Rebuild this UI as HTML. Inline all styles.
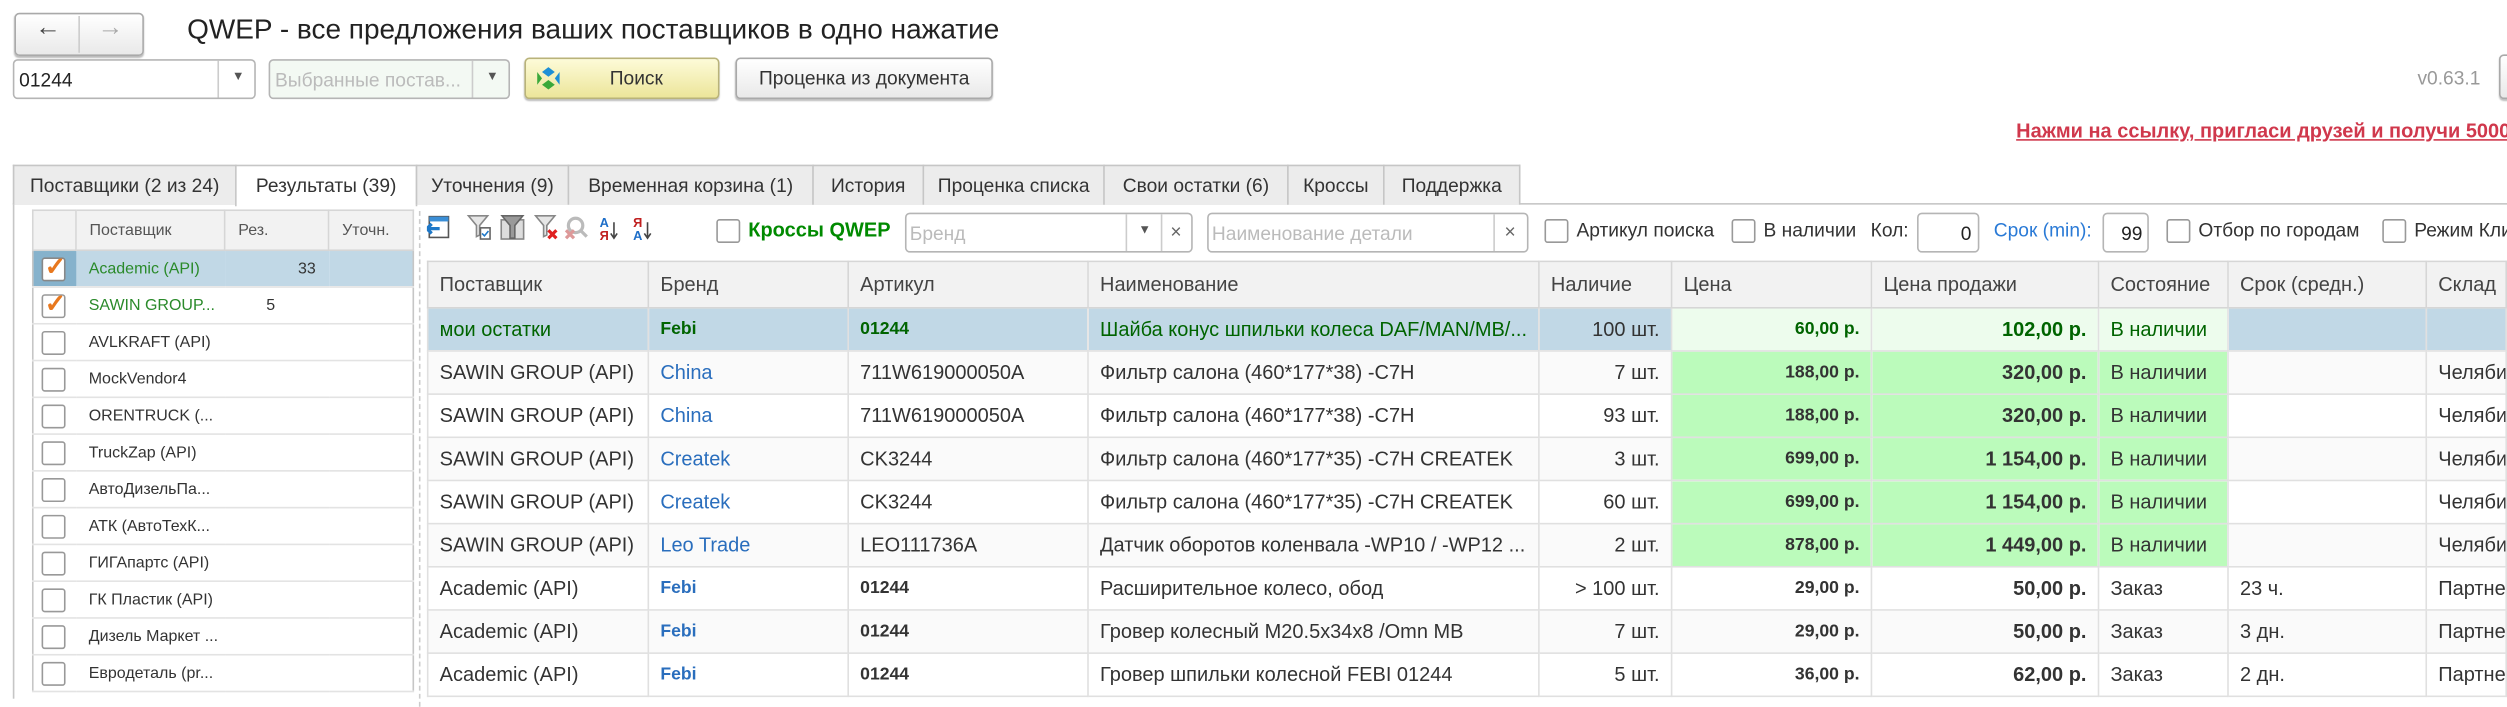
<!DOCTYPE html>
<html><head><meta charset="utf-8"><style>
*{box-sizing:border-box;margin:0;padding:0}
html,body{width:2507px;height:695px;overflow:hidden;background:#fff}
#w{position:absolute;left:0;top:0;width:1568px;height:435px;transform:scale(1.59885);transform-origin:0 0;font-family:"Liberation Sans",Arial,sans-serif;color:#333;font-size:12px}
.a{position:absolute}
.inp{position:absolute;border:1px solid #b5b5b5;border-radius:3px;background:#fff;height:25px}
.btn{position:absolute;border:1px solid #a9a9a9;border-radius:3px;background:linear-gradient(#fff,#e9e9e9);height:26px;text-align:center;line-height:24px;box-shadow:0 1px 1px #bbb;font-size:12px}
.cb{position:absolute;width:15px;height:15px;border:1px solid #999;border-radius:2px;background:#fff}
.tab{position:absolute;top:103px;height:25px;border:1px solid #c6c6c6;border-bottom:none;background:#ececec;line-height:24px;text-align:center;font-size:12px;color:#333;white-space:nowrap}
table{border-collapse:collapse;table-layout:fixed}
#g{position:absolute;left:267px;top:163px;width:1301px}
#g td{height:27px;border:1px solid #e0e0e0;padding:0 7px;white-space:nowrap;overflow:hidden;font-size:12.5px;vertical-align:middle}
#g tr.h td{height:29px;background:#f2f2f2;border:1px solid #d6d6d6;color:#444}
.r{text-align:right}
.b{font-weight:bold}
#g td.bl{color:#2a6ebd;font-weight:bold;font-size:11px}
#g td.bk{font-weight:bold;font-size:11px}
.pl{background:#bbfbbb}
.sel td{background:#c1d8e6}
.gr{color:#006400}
#l{position:absolute;left:20px;top:131px;width:238px}
#l td{height:23px;border-bottom:1px solid #e3e3e3;font-size:10px;padding:0 0 0 8px;white-space:nowrap;overflow:hidden;color:#333;vertical-align:middle}
#l tr.h td{height:25px;background:#f2f2f2;border:1px solid #d6d6d6;color:#555}
</style></head><body><div id="w">
<!-- nav -->
<div class="btn" style="left:9px;top:8px;width:81px;height:27px"></div>
<div class="a" style="left:49px;top:10px;width:1px;height:23px;background:#ccc"></div>
<div class="a" style="left:22px;top:9px;font-size:16px;color:#444;font-weight:bold">&#8592;</div>
<div class="a" style="left:61px;top:9px;font-size:16px;color:#aaa;font-weight:bold">&#8594;</div>
<div class="a" style="left:117px;top:8px;font-size:17.5px;color:#222">QWEP - все предложения ваших поставщиков в одно нажатие</div>
<!-- row 2 -->
<div class="inp" style="left:8px;top:37px;width:152px"><span class="a" style="left:3px;top:5px;font-size:12px;color:#222">01244</span><span class="a" style="left:127px;top:0;width:1px;height:23px;background:#ccc"></span><span class="a" style="left:136px;top:5px;font-size:8px;color:#555">&#9660;</span></div>
<div class="inp" style="left:168px;top:37px;width:151px;background:#f3f9f3"><span class="a" style="left:3px;top:5px;font-size:12px;color:#bbb">Выбранные постав...</span><span class="a" style="left:126px;top:0;width:1px;height:23px;background:#ccc"></span><span class="a" style="left:135px;top:5px;font-size:8px;color:#555">&#9660;</span></div>
<div class="btn" style="left:328px;top:36px;width:122px;background:linear-gradient(#fdfbd8,#ece59a);border-color:#b9b37a"><svg class="a" style="left:6px;top:4px" width="16" height="16" viewBox="0 0 16 16"><path d="M8 1l4 3-4 3-4-3z" fill="#1e8fd6"/><path d="M8 9l4 3-4 3-4-3z" fill="#3aa83a"/><path d="M1 4l3 4-3 4z" fill="#3aa83a"/><path d="M15 4l-3 4 3 4z" fill="#1e8fd6"/></svg><span style="margin-left:18px">Поиск</span></div>
<div class="btn" style="left:460px;top:36px;width:161px">Проценка из документа</div>
<div class="a" style="left:1512px;top:42px;font-size:12px;color:#999">v0.63.1</div>
<div class="btn" style="left:1563px;top:34px;width:20px;height:28px"></div>
<div class="a" style="left:1261px;top:75px;font-size:12.5px;font-weight:bold;color:#d0384c;text-decoration:underline;white-space:nowrap">Нажми на ссылку, пригласи друзей и получи 5000</div>
<!-- tabs -->
<div class="a" style="left:8px;top:127px;width:1560px;height:1px;background:#c6c6c6"></div>
<div class="a" style="left:8px;top:127px;width:1px;height:310px;background:#c6c6c6"></div>
<div class="tab" style="left:8px;width:140px">Поставщики (2 из 24)</div>
<div class="tab" style="left:147px;width:114px;background:#fff;height:26px">Результаты (39)</div>
<div class="tab" style="left:260px;width:96px">Уточнения (9)</div>
<div class="tab" style="left:355px;width:154px">Временная корзина (1)</div>
<div class="tab" style="left:508px;width:70px">История</div>
<div class="tab" style="left:577px;width:114px">Проценка списка</div>
<div class="tab" style="left:690px;width:116px">Свои остатки (6)</div>
<div class="tab" style="left:805px;width:61px">Кроссы</div>
<div class="tab" style="left:865px;width:86px">Поддержка</div>
<!-- left panel -->
<table id="l" style="border:1px solid #c6c6c6">
<colgroup><col style="width:27px"><col style="width:93px"><col style="width:65px"><col style="width:53px"></colgroup>
<tr class="h"><td></td><td>Поставщик</td><td>Рез.</td><td>Уточн.</td></tr>
<tr style="background:#c1d8e6"><td style="background:#86b2cc"><div class="cb" style="position:relative;left:-3px;border-color:#888"><span class="a" style="left:1px;top:-5px;color:#e8781e;font-size:16px;font-weight:bold">&#10003;</span></div></td><td style="color:#2a8a2a">Academic (API)</td><td class="r" style="padding-right:8px">33</td><td></td></tr>
<tr><td><div class="cb" style="position:relative;left:-3px"><span class="a" style="left:1px;top:-5px;color:#e8781e;font-size:16px;font-weight:bold">&#10003;</span></div></td><td style="color:#2a8a2a">SAWIN GROUP...</td><td style="padding-left:26px">5</td><td></td></tr>
<tr><td><div class="cb" style="position:relative;left:-3px"></div></td><td colspan="3">AVLKRAFT (API)</td></tr>
<tr><td><div class="cb" style="position:relative;left:-3px"></div></td><td colspan="3">MockVendor4</td></tr>
<tr><td><div class="cb" style="position:relative;left:-3px"></div></td><td colspan="3">ORENTRUCK (...</td></tr>
<tr><td><div class="cb" style="position:relative;left:-3px"></div></td><td colspan="3">TruckZap (API)</td></tr>
<tr><td><div class="cb" style="position:relative;left:-3px"></div></td><td colspan="3">АвтоДизельПа...</td></tr>
<tr><td><div class="cb" style="position:relative;left:-3px"></div></td><td colspan="3">АТК (АвтоТехК...</td></tr>
<tr><td><div class="cb" style="position:relative;left:-3px"></div></td><td colspan="3">ГИГАпартс (API)</td></tr>
<tr><td><div class="cb" style="position:relative;left:-3px"></div></td><td colspan="3">ГК Пластик (API)</td></tr>
<tr><td><div class="cb" style="position:relative;left:-3px"></div></td><td colspan="3">Дизель Маркет ...</td></tr>
<tr><td><div class="cb" style="position:relative;left:-3px"></div></td><td colspan="3">Евродеталь (pr...</td></tr>
</table>
<div class="a" style="left:262px;top:132px;width:0;height:310px;border-left:1px dashed #ccc"></div>
<!-- toolbar icons -->
<svg class="a" style="left:267px;top:133px" width="150" height="20" viewBox="0 0 150 20">
<rect x="1.5" y="2.5" width="12" height="13" fill="#fff" stroke="#555"/><rect x="1.5" y="2.5" width="12" height="3" fill="#3a8ed6"/><path d="M0 10h8M3 7l-3 3 3 3" stroke="#1e78c8" stroke-width="2" fill="none"/>
<path d="M26 2h12l-5 6v6l-2 1v-7z" fill="#e6e6e6" stroke="#888"/><rect x="33.5" y="9.5" width="6" height="7" fill="#fff" stroke="#666"/><path d="M34.5 13l1.5 1.5 2.5-3" stroke="#1e78c8" fill="none"/>
<rect x="46.5" y="4.5" width="14" height="12" fill="#ddd" stroke="#888"/><path d="M47 2h13l-5 6v8h-3v-8z" fill="#999" stroke="#666"/>
<path d="M68 2h12l-5 6v6l-2 1v-7z" fill="#e6e6e6" stroke="#888"/><path d="M76 11l5 5M81 11l-5 5" stroke="#e02020" stroke-width="2"/>
<circle cx="93" cy="8" r="4.5" fill="none" stroke="#bbb" stroke-width="2"/><path d="M96 11l4 4" stroke="#bbb" stroke-width="2"/><path d="M87 11l5 5M92 11l-5 5" stroke="#d99" stroke-width="2"/>
<text x="108" y="9" font-size="8" font-weight="bold" fill="#1e6ec8" font-family="Liberation Sans">А</text><text x="108" y="17" font-size="8" font-weight="bold" fill="#c02020" font-family="Liberation Sans">Я</text><path d="M117 6v9M115 13l2 3 2-3" stroke="#444" fill="none"/>
<text x="129" y="9" font-size="8" font-weight="bold" fill="#c02020" font-family="Liberation Sans">Я</text><text x="129" y="17" font-size="8" font-weight="bold" fill="#1e6ec8" font-family="Liberation Sans">А</text><path d="M138 6v9M136 13l2 3 2-3" stroke="#444" fill="none"/>
</svg>
<div class="cb" style="left:448px;top:137px"></div>
<div class="a" style="left:468px;top:137px;font-size:12.5px;font-weight:bold;color:#008a00">Кроссы QWEP</div>
<div class="inp" style="left:566px;top:133px;width:180px"><span class="a" style="left:2px;top:5px;color:#bbb">Бренд</span><span class="a" style="left:137px;top:0;width:1px;height:23px;background:#ccc"></span><span class="a" style="left:145px;top:5px;font-size:8px;color:#555">&#9660;</span><span class="a" style="left:159px;top:0;width:1px;height:23px;background:#ccc"></span><span class="a" style="left:165px;top:4px;color:#666">×</span></div>
<div class="inp" style="left:755px;top:133px;width:201px"><span class="a" style="left:2px;top:5px;color:#bbb">Наименование детали</span><span class="a" style="left:178px;top:0;width:1px;height:23px;background:#ccc"></span><span class="a" style="left:185px;top:4px;color:#666">×</span></div>
<div class="cb" style="left:966px;top:137px"></div><div class="a" style="left:986px;top:137px">Артикул поиска</div>
<div class="cb" style="left:1083px;top:137px"></div><div class="a" style="left:1103px;top:137px">В наличии</div>
<div class="a" style="left:1170px;top:137px">Кол:</div>
<div class="inp" style="left:1199px;top:133px;width:39px"><span class="a" style="right:4px;top:5px;color:#222">0</span></div>
<div class="a" style="left:1247px;top:137px;color:#2a7ad6">Срок (min):</div>
<div class="inp" style="left:1315px;top:133px;width:29px"><span class="a" style="right:3px;top:5px;color:#222">99</span></div>
<div class="cb" style="left:1355px;top:137px"></div><div class="a" style="left:1375px;top:137px">Отбор по городам</div>
<div class="cb" style="left:1490px;top:137px"></div><div class="a" style="left:1510px;top:137px;white-space:nowrap">Режим Клиента</div>
<!-- grid -->
<table id="g" style="border:1px solid #bbb">
<colgroup><col style="width:138px"><col style="width:125px"><col style="width:150px"><col style="width:282px"><col style="width:83px"><col style="width:125px"><col style="width:142px"><col style="width:81px"><col style="width:124px"><col></colgroup>
<tr class="h"><td>Поставщик</td><td>Бренд</td><td>Артикул</td><td>Наименование</td><td>Наличие</td><td>Цена</td><td>Цена продажи</td><td>Состояние</td><td>Срок (средн.)</td><td>Склад</td></tr>
<tr class="sel"><td class="gr">мои остатки</td><td class="bk gr">Febi</td><td class="bk gr">01244</td><td class="gr">Шайба конус шпильки колеса DAF/MAN/MB/...</td><td class="r">100 шт.</td><td class="r bk gr" style="background:#edfced">60,00 р.</td><td class="r b gr" style="background:#edfced">102,00 р.</td><td class="gr" style="background:#edfced">В наличии</td><td></td><td></td></tr>
<tr style="background:#fafafa"><td>SAWIN GROUP (API)</td><td style="color:#2a6ebd">China</td><td>711W619000050A</td><td>Фильтр салона (460*177*38) -C7H</td><td class="r">7 шт.</td><td class="r bk pl">188,00 р.</td><td class="r b pl">320,00 р.</td><td class="pl">В наличии</td><td></td><td>Челяби...</td></tr>
<tr><td>SAWIN GROUP (API)</td><td style="color:#2a6ebd">China</td><td>711W619000050A</td><td>Фильтр салона (460*177*38) -C7H</td><td class="r">93 шт.</td><td class="r bk pl">188,00 р.</td><td class="r b pl">320,00 р.</td><td class="pl">В наличии</td><td></td><td>Челяби...</td></tr>
<tr style="background:#fafafa"><td>SAWIN GROUP (API)</td><td style="color:#2a6ebd">Createk</td><td>CK3244</td><td>Фильтр салона (460*177*35) -C7H CREATEK</td><td class="r">3 шт.</td><td class="r bk pl">699,00 р.</td><td class="r b pl">1 154,00 р.</td><td class="pl">В наличии</td><td></td><td>Челяби...</td></tr>
<tr><td>SAWIN GROUP (API)</td><td style="color:#2a6ebd">Createk</td><td>CK3244</td><td>Фильтр салона (460*177*35) -C7H CREATEK</td><td class="r">60 шт.</td><td class="r bk pl">699,00 р.</td><td class="r b pl">1 154,00 р.</td><td class="pl">В наличии</td><td></td><td>Челяби...</td></tr>
<tr style="background:#fafafa"><td>SAWIN GROUP (API)</td><td style="color:#2a6ebd">Leo Trade</td><td>LEO111736A</td><td>Датчик оборотов коленвала -WP10 / -WP12 ...</td><td class="r">2 шт.</td><td class="r bk pl">878,00 р.</td><td class="r b pl">1 449,00 р.</td><td class="pl">В наличии</td><td></td><td>Челяби...</td></tr>
<tr><td>Academic (API)</td><td class="bl">Febi</td><td class="bk">01244</td><td>Расширительное колесо, обод</td><td class="r">&gt; 100 шт.</td><td class="r bk">29,00 р.</td><td class="r b">50,00 р.</td><td>Заказ</td><td>23 ч.</td><td>Партне...</td></tr>
<tr style="background:#fafafa"><td>Academic (API)</td><td class="bl">Febi</td><td class="bk">01244</td><td>Гровер колесный M20.5x34x8 /Omn MB</td><td class="r">7 шт.</td><td class="r bk">29,00 р.</td><td class="r b">50,00 р.</td><td>Заказ</td><td>3 дн.</td><td>Партне...</td></tr>
<tr><td>Academic (API)</td><td class="bl">Febi</td><td class="bk">01244</td><td>Гровер шпильки колесной FEBI 01244</td><td class="r">5 шт.</td><td class="r bk">36,00 р.</td><td class="r b">62,00 р.</td><td>Заказ</td><td>2 дн.</td><td>Партне...</td></tr>
</table>
</div></body></html>
